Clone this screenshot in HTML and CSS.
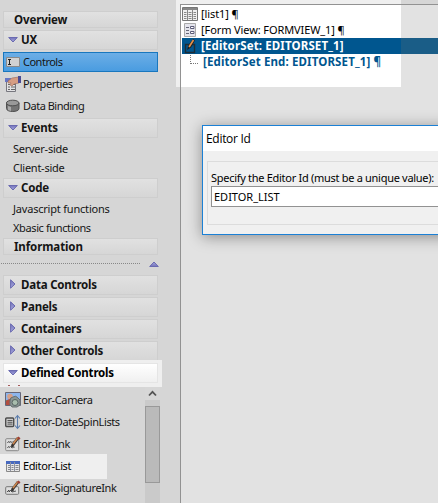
FILE: index.html
```html
<!DOCTYPE html>
<html lang="en">
<head>
<meta charset="utf-8">
<title>Editor Id</title>
<link rel="stylesheet" href="styles.css">
</head>
<body>
<svg width="0" height="0" class="defs">
  <defs>
    <linearGradient id="tri" x1="0" y1="0" x2="0" y2="1"><stop offset="0" stop-color="#7272ba"/><stop offset="1" stop-color="#aaaadf"/></linearGradient>
    <symbol id="down" viewBox="0 0 10 6"><path d="M.7.5h8.6L5 5z" fill="url(#tri)" stroke="#6a6ab0"/></symbol>
    <symbol id="right" viewBox="0 0 6 10"><path d="M.6.8v8.4L5 5z" fill="url(#tri)" stroke="#6a6ab0"/></symbol>
    <symbol id="pencil" viewBox="0 0 16 16"><path d="M7 10 13 2" stroke="#3c3430" stroke-width="2.8"/><path d="M8 8 13 1.5" stroke="#cf8850" stroke-width="1.5"/><path d="m12 2 1.5-1.5 2 1.8L14 4z" fill="#9b4037"/><path d="m6 12 .5-3 2.5 1.5z" fill="#333"/></symbol>
  </defs>
</svg>
<div class="app">
  <aside class="sidebar">
    <nav class="nav">
      <div class="head plain"><span>Overview</span></div>
      <div class="head"><svg class="down"><use href="#down"/></svg><span>UX</span></div>
      <div class="item selected"><svg class="icon" viewBox="0 0 16 16"><path d="M1.5 3.5h13v9h-13z" fill="#d2d2d2" stroke="#8a8a8a"/><path d="M3 5.5h3M3 10.5h3M4.5 5v6" stroke="#222" fill="none"/></svg><span class="tight">Controls</span></div>
      <div class="item"><svg class="icon" viewBox="0 0 16 16"><path d="M1.5 3.5h9v12h-9z" fill="#e2e2e4" stroke="#77777e"/><path d="M0 2h6v4H0z" fill="#6676c5"/><path d="M3 8.5h2m1 0h4M3 11h2m1 0h4M3 13.5h2m1 0h4" stroke="#666"/><path d="M3 5 7 2l7-1v6l-5 1-2 2-2-1 1-2-3 0z" fill="#d69d83" stroke="#9a6858" stroke-width=".6"/><path d="M13 0h3v7h-3z" fill="#4b4c93"/></svg><span>Properties</span></div>
      <div class="item"><svg class="icon" viewBox="0 0 16 16"><path d="M1.5 5v5.5c0 4 12.5 4 12.5 0V5" fill="#747474" stroke="#505050"/><path d="M3 8v4l3 1V9z" fill="#aaa"/><ellipse cx="7.7" cy="5" rx="6.3" ry="2.8" fill="#999" stroke="#505050"/></svg><span class="tight">Data Binding</span></div>
      <div class="head"><svg class="down"><use href="#down"/></svg><span>Events</span></div>
      <div class="sub">Server-side</div>
      <div class="sub">Client-side</div>
      <div class="head"><svg class="down"><use href="#down"/></svg><span>Code</span></div>
      <div class="sub js">Javascript functions</div>
      <div class="sub xb">Xbasic functions</div>
      <div class="head plain info"><span>Information</span></div>
    </nav>
    <div class="splitter"><i></i><svg class="up"><use href="#down"/></svg></div>
    <div class="groups">
      <div class="head"><svg class="right"><use href="#right"/></svg><span>Data Controls</span></div>
      <div class="head"><svg class="right"><use href="#right"/></svg><span>Panels</span></div>
      <div class="head"><svg class="right"><use href="#right"/></svg><span>Containers</span></div>
      <div class="head"><svg class="right"><use href="#right"/></svg><span>Other Controls</span></div>
    </div>
    <div class="focus"><div class="head"><svg class="down"><use href="#down"/></svg><span>Defined Controls</span></div><div class="bits"><i></i><i></i></div></div>
    <div class="editors">
      <div class="list">
        <div class="item"><svg class="icon" viewBox="0 0 16 16"><path d="M.5.5h15v13H.5z" fill="#8db6ed" stroke="#667"/><path d="M1 8h14v5H1z" fill="#669668"/><circle cx="5" cy="4.5" r="2.8" fill="#d7a087"/><path d="M1 13V9q4-4 8 0v4z" fill="#b34e40"/><path d="M5 9q0-4 3-4 3-2 5 1l2 2v5l-3 2H7q-3-2-2-6z" fill="#8b9696" stroke="#667070"/><circle cx="10" cy="10.5" r="3" fill="#a8bdad" stroke="#576562"/></svg><span>Editor-Camera</span></div>
        <div class="item"><svg class="icon" viewBox="0 0 16 16"><rect x=".7" y="4" width="8" height="8.5" rx="1" fill="#ccc" stroke="#4d4d4d" stroke-width="1.4"/><path d="M2.5 6.5h5M2.5 8.3h5M2.5 10.1h5" stroke="#555"/><path d="M12.5 2v12M10 4.5l2.5-3 2.5 3M10 11.5l2.5 3 2.5-3" fill="none" stroke="#5c7dac" stroke-width="1.1"/></svg><span>Editor-DateSpinLists</span></div>
        <div class="item"><svg class="icon" viewBox="0 0 16 16"><rect x=".7" y="2.7" width="13" height="12" rx="1" fill="#dedede" stroke="#888"/><path d="m2 7 2-2 0 2 2-2 0 2 3-2M2 12l2-2 0 2 2-2 1 2 3-1" fill="none" stroke="#666" stroke-width=".8"/><use href="#pencil" width="16" height="16"/></svg><span>Editor-Ink</span></div>
        <div class="item lit"><svg class="icon" viewBox="0 0 16 16"><path d="M1.5 3.5h13v10h-13z" fill="#e7e7e7" stroke="#888"/><path d="M1 3h14v3H1z" fill="#4769bf"/><path d="M5.5 4v9m4-9v9" stroke="#8d92a3"/><path d="M3 7.5h2m1.5 0h2m2 0h3M3 9.5h2m1.5 0h2m2 0h3M3 11.5h2m1.5 0h2m2 0h3" stroke="#84878e"/></svg><span>Editor-List</span></div>
        <div class="item"><svg class="icon" viewBox="0 0 16 16"><rect x=".7" y="6.7" width="13" height="7.6" rx="1" fill="#dedede" stroke="#777"/><path d="m2 12 2-2 0 2 2-2 1 2 4-1" fill="none" stroke="#333" stroke-width=".8"/><use href="#pencil" width="16" height="16"/></svg><span>Editor-SignatureInk</span></div>
      </div>
      <div class="scroll"><svg viewBox="0 0 15 13"><path d="m4 8.5 3.5-3.7L11 8.5" fill="none" stroke="#555" stroke-width="1.8"/></svg><div class="thumb"></div></div>
    </div>
  </aside>
  <main class="stage">
    <div class="tree">
      <div class="node"><svg class="tico" viewBox="0 0 16 16"><path d="M.5 1.5h15v13H.5z" fill="#f0f0f0" stroke="#777"/><path d="M1 2h14v2H1z" fill="#888"/><path d="M5.5 2v12m5-12v12" stroke="#888"/><path d="M2 6.5h2.5m2 0h3m2 0H14M2 8.5h2.5m2 0h3m2 0H14M2 10.5h2.5m2 0h3m2 0H14M2 12.5h2.5m2 0h3m2 0H14" stroke="#888"/></svg><span>[list1] ¶</span></div>
      <div class="node"><svg class="tico" viewBox="0 0 16 16"><path d="M2.5 1.5h11v13h-11z" fill="#e4e4ec" stroke="#aaa"/><path d="M4 5.5h3M4 8.5h3M4 11.5h3" stroke="#667"/><path d="M8.5 4.5H12v2H8.5zM8.5 9.5H12v2H8.5z" fill="#fff" stroke="#5c5c78"/></svg><span>[Form View: FORMVIEW_1] ¶</span></div>
      <div class="node active"><svg class="tico" viewBox="0 0 16 16"><path d="M3.5 6.5h9v8h-9z" fill="none" stroke="#1d2d38" stroke-width="1.4"/><path d="m5 12 1.5-5L11 1l2 1.5-4 7z" fill="#1a2023"/><path d="m7 9 4.5-7" stroke="#e3904b" stroke-width="1.7"/></svg><span>[EditorSet: EDITORSET_1]</span></div>
      <div class="node end"><i class="branch"></i><span>[EditorSet End: EDITORSET_1] ¶</span></div>
    </div>
    <section class="dialog">
      <div class="title">Editor Id</div>
      <div class="body"><div class="group"><label>Specify the Editor Id (must be a unique value):</label><div class="input">EDITOR_LIST</div></div></div>
    </section>
  </main>
</div>
</body>
</html>
```
FILE: styles.css
```css
* { box-sizing: border-box; }
body { margin: 0; width: 438px; height: 503px; overflow: hidden; background: #d6d6d6; color: #151515; font: 11px/15px "Noto Sans", sans-serif; white-space: nowrap; }
.defs { position: absolute; }
svg { flex: none; display: block; }
.app { display: flex; height: 503px; }
.sidebar { width: 176px; flex: none; padding-top: 11px; display: flex; flex-direction: column; }
.head { display: flex; align-items: center; width: 155px; height: 20px; margin: 0 0 2px 3px; padding: 0 0 2px 4px; border: 1px solid #cecece; background: linear-gradient(#e1e1e1, #d6d6d6); font-weight: 700; font-size: 11.5px; letter-spacing: -.2px; }
.head span { margin-left: 3px; }
.plain { height: 17px; padding: 0 0 0 7px; letter-spacing: -.1px; }
.down, .up { width: 10px; height: 6px; }
.right { width: 6px; height: 10px; margin: 0 2px; }
.down { margin-top: 1px; }
.up { transform: rotate(180deg); }
.item { display: flex; align-items: center; height: 22px; padding-left: 5px; letter-spacing: -.38px; }
.icon { width: 16px; height: 16px; margin-right: 2px; }
.item span { margin-top: -2px; }
.item .tight { letter-spacing: -.5px; }
.list .item span { margin-top: -1px; }
.selected { width: 155px; height: 20px; margin: 0 0 1px 3px; padding-left: 1px; border: 1px solid #1977be; background: linear-gradient(#6caee6, #4a9ce0); }
.nav .item:not(.selected) + .head { margin-top: 1px; }
.sub { height: 19px; line-height: 17px; padding-left: 13px; letter-spacing: -.25px; }
.js { letter-spacing: -.2px; }
.xb { letter-spacing: -.38px; }
.info { margin-bottom: 0; }
.splitter { display: flex; height: 20px; align-items: center; padding: 0 0 3px 1px; }
.splitter i { width: 139px; border-top: 1px dotted #888; margin-right: 9px; }
.focus { width: 162px; height: 27px; padding-top: 3px; margin-top: -3px; background: #efefef; }
.focus .head { background: linear-gradient(#fff, #f0f0f0); border-color: #e5e5e5; color: #000; margin-bottom: 2px; }
.bits { display: flex; gap: 8px; padding-left: 8px; }
.bits i { width: 2px; height: 1px; background: #a65b5b; }
.editors { display: flex; flex: 1; min-height: 0; }
.list { width: 145px; padding-top: 2px; }
.lit { width: 107px; height: 25px; margin: -1px 0 -2px; padding-bottom: 1px; background: #efefef; color: #000; }
.scroll { width: 15px; height: 116px; background: #cacaca; }
.scroll svg { width: 15px; height: 13px; background: #d7d7d7; }
.thumb { height: 77px; margin-top: 6px; background: #bababa; border: 1px solid #999; }
.stage { flex: 1; padding: 4px 0 0 4px; background: linear-gradient(#efefef, #efefef) 0 0 / 225px 87px no-repeat, #d6d6d6; }
.tree { height: 499px; padding: 1px 0 0 1px; border: solid #929292; border-width: 1px 0 0 1px; background: linear-gradient(#fff, #fff) 0 0 / 220px 82px no-repeat, #e2e2e2; }
.node { display: flex; align-items: center; height: 16px; color: #000; letter-spacing: -.1px; }
.tico { width: 16px; height: 16px; margin-right: 3px; }
.node span { margin-top: -1px; }
.active, .end { font-size: 11.5px; font-weight: 700; letter-spacing: .13px; }
.active { color: #fff; background: linear-gradient(90deg, #00568f 219px, #1a5d87 219px); }
.end { color: #00568f; }
.branch { width: 8px; height: 9px; margin: -6px 5px 0 8px; border: dotted #777; border-width: 0 0 1px 1px; }
.dialog { position: absolute; left: 202px; top: 125px; width: 250px; height: 110px; border: 1px solid #1b80d5; background: #f0f0f0; box-shadow: 0 2px 14px rgba(0,0,0,.38); color: #000; }
.title { height: 25px; padding-left: 3px; background: #fff; font: 12px/25px "Open Sans", sans-serif; letter-spacing: -.3px; }
.body { padding: 10px 0 0 4px; }
.group { height: 64px; padding: 8px 0 0 3px; border: 1px solid #dcdcdc; }
label { display: block; height: 16px; letter-spacing: -.29px; }
.input { height: 21px; border: 1px solid #929292; background: #fff; padding-left: 2px; line-height: 20px; letter-spacing: 0; }
```
